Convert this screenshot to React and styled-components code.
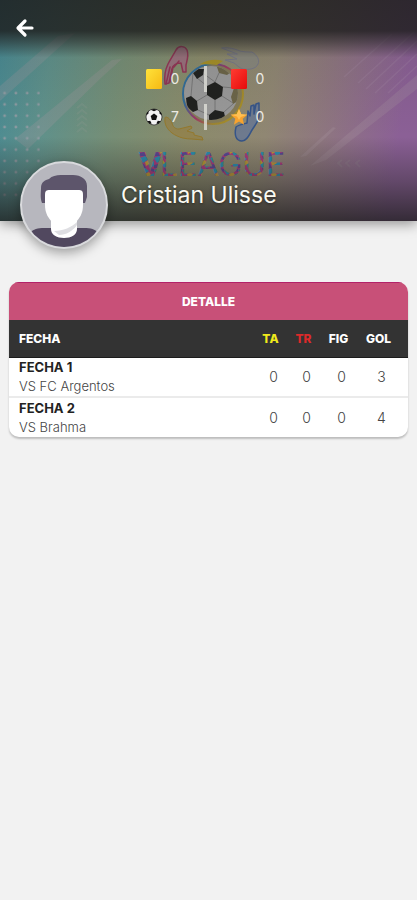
import React from "react";
import styled, { createGlobalStyle } from "styled-components";

const GlobalStyle = createGlobalStyle`
  * { box-sizing: border-box; }
  body {
    margin: 0;
    background: #f2f2f2;
    font-family: Inter, "Open Sans", sans-serif;
    color: #222;
  }
`;

const Screen = styled.div`
  min-height: 100vh;
  background: #f2f2f2;
`;

const Hero = styled.header`
  position: relative;
  display: flex;
  flex-direction: column;
  box-shadow: 0 3px 12px rgba(0, 0, 0, 0.4);
`;

const Backdrop = styled.svg`
  position: absolute;
  inset: 0;
  width: 100%;
  height: 100%;
`;

const TopBar = styled.nav`
  position: relative;
  display: flex;
  align-items: center;
  height: 56px;
  padding: 0 11px;
`;

const BackButton = styled.button`
  display: grid;
  place-items: center;
  width: 28px;
  height: 28px;
  padding: 0;
  border: 0;
  background: none;
  cursor: pointer;
`;

const Stats = styled.div`
  position: relative;
  display: grid;
  grid-template-columns: auto 3px auto;
  justify-content: center;
  gap: 12px 23px;
  padding: 10px 6px 0 0;
`;

const Stat = styled.div`
  display: flex;
  align-items: center;
  gap: 6px;
  height: 26px;
  font-size: 14px;
  line-height: 20px;
  color: #eceae4;
`;

const StatValue = styled.span`
  width: 12px;
  text-align: center;
`;

const Divider = styled.span`
  background: rgba(222, 222, 216, 0.8);
`;

const Profile = styled.div`
  position: relative;
  display: flex;
  align-items: flex-start;
  gap: 13px;
  margin: 31px 0 -28px;
  padding: 0 20px;
`;

const Avatar = styled.svg`
  flex: none;
  width: 88px;
  height: 88px;
  border: 2px solid #d9dadd;
  border-radius: 50%;
  background: #b7b7be;
  box-shadow: 0 4px 12px rgba(0, 0, 0, 0.35);
`;

const Name = styled.h1`
  margin: 20px 0 0;
  font-size: 23px;
  line-height: 28px;
  font-weight: 400;
  color: #fbfaf2;
  text-shadow: 0 1px 3px rgba(0, 0, 0, 0.5);
`;

const Card = styled.section`
  margin: 61px 9px 0;
  border-radius: 10px;
  overflow: hidden;
  background: #fff;
  box-shadow: 0 2px 2px rgba(0, 0, 0, 0.22);
`;

const Table = styled.table`
  width: 100%;
  border-collapse: collapse;
  table-layout: fixed;
`;

const Caption = styled.caption`
  height: 38px;
  border-top: 1px solid #b32269;
  background: #c85078;
  color: #fff;
  font-size: 12px;
  line-height: 37px;
  font-weight: 800;
`;

const HeadCell = styled.th`
  width: ${(p) => p.$width || "auto"};
  height: 37px;
  padding: ${(p) => p.$padding || "2px 0 0"};
  border-bottom: 1px solid #1c1c1c;
  background: #333;
  color: ${(p) => p.$color || "#fff"};
  font-size: 12px;
  line-height: 16px;
  font-weight: 800;
  text-align: ${(p) => p.$align || "center"};
`;

const Row = styled.tr`
  height: 40px;
  & + & > * { border-top: 2px solid #ebebeb; }
`;

const MatchCell = styled.th`
  padding: 0 10px;
  text-align: left;
  font-weight: 300;
  font-size: 13px;
  line-height: 19px;
  color: #444;
`;

const Round = styled.strong`
  display: block;
  font-weight: 700;
  color: #222;
`;

const ValueCell = styled.td`
  padding: ${(p) => p.$padding || "0 0 0 6px"};
  text-align: center;
  font-size: 14px;
  line-height: 18px;
  font-weight: 300;
  color: #444;
`;

const pentagons = (
  <g fill="#20211f">
    <path d="M207 86l8-4 8 5-1 9-7 4-8-5z" />
    <path d="M186 98l5-2 6 5 1 9-5 2-6-5z" />
    <path d="M209 115l6-5 9 2 1 5-7 5-9-2z" />
    <path d="M193 73l5-4 6 0-1 6-6 4z" />
    <path d="M217 67l8 0 6 5-4 3-8-2z" fill="#6c6548" />
    <path d="M234 88l5 1-1 12-5 3-2-7z" fill="#6c6548" />
  </g>
);

function LeagueBackdrop() {
  return (
    <Backdrop viewBox="0 0 417 221" preserveAspectRatio="xMidYMid slice" aria-hidden="true">
      <defs>
        <linearGradient id="field" x1="0" y1="0" x2="1" y2="0.08">
          <stop offset="0" stopColor="#478a94" />
          <stop offset="0.14" stopColor="#5f918b" />
          <stop offset="0.32" stopColor="#778e75" />
          <stop offset="0.5" stopColor="#8b8b6b" />
          <stop offset="0.68" stopColor="#908773" />
          <stop offset="0.82" stopColor="#8e7680" />
          <stop offset="1" stopColor="#8b6096" />
        </linearGradient>
        <linearGradient id="shade" x1="0" y1="0" x2="0" y2="1">
          <stop offset="0" stopColor="#1c1c1c" stopOpacity="0.84" />
          <stop offset="0.14" stopColor="#1c1c1c" stopOpacity="0.82" />
          <stop offset="0.19" stopColor="#222" stopOpacity="0.55" />
          <stop offset="0.26" stopColor="#222" stopOpacity="0.08" />
          <stop offset="0.62" stopColor="#222" stopOpacity="0" />
          <stop offset="0.82" stopColor="#222" stopOpacity="0.38" />
          <stop offset="1" stopColor="#1c1c1c" stopOpacity="0.78" />
        </linearGradient>
        <pattern id="dots" width="11.3" height="11.3" patternUnits="userSpaceOnUse" x="-1" y="87.5">
          <circle cx="5.6" cy="5.6" r="1.4" fill="#8d9ba2" />
        </pattern>
        <pattern id="confetti" width="14" height="12" patternUnits="userSpaceOnUse">
          <rect width="14" height="12" fill="#b03a7c" />
          <path d="M0 2l5-2 4 3-6 4zM8 8l6-3v5l-4 2z" fill="#2a8fb4" />
          <path d="M5 6l4-2 2 3-5 3z" fill="#c09a35" />
          <path d="M0 9l4-1 2 4H0zM10 0l4 1v3l-3-1z" fill="#5a4796" />
        </pattern>
        <linearGradient id="ring" x1="0" y1="0" x2="1" y2="0.6">
          <stop offset="0" stopColor="#316c99" />
          <stop offset="0.3" stopColor="#316c99" />
          <stop offset="0.55" stopColor="#9c3665" />
          <stop offset="0.8" stopColor="#9b8433" />
          <stop offset="1" stopColor="#a68d28" />
        </linearGradient>
        <clipPath id="ballClip"><circle cx="211" cy="93" r="27" /></clipPath>
      </defs>
      <rect width="417" height="221" fill="url(#field)" />
      <g fill="#ab9aa3" opacity="0.24">
        <path d="M0 86 58 36 75 33 0 101z" />
        <path d="M15 139 112 60 122 59 103 76 28 149z" />
        <path d="M310 166 417 75V89L326 160z" />
        <path d="M300 157 333 127 336 128 306 156z" />
      </g>
      <path
        d="M344 77l48-43M358 83l56-51M366 89l51-48M375 93l42-39M388 93l29-27"
        stroke="#b094af" strokeWidth="1.5" opacity="0.2" fill="none"
      />
      <rect x="-1" y="87.5" width="41" height="113" fill="url(#dots)" />
      <path
        d="M77 108l5-4 5 4M77 114l5-4 5 4M77 120l5-4 5 4M77 126l5-4 5 4M77 132l5-4 5 4M342 160l-4 3 4 4M350 160l-4 3 4 4M360 160l-4 3 4 4"
        fill="none" stroke="#a4a19b" strokeWidth="2" opacity="0.16"
      />
      <g strokeLinejoin="round" strokeLinecap="round">
        <path
          d="M165 84c-1-8 0-14 3-20 3-6 6-10 8-14 3-5 9-4 11 0 2 5 0 11-1 15l0 7-3 0-2-9c-5 0-8 2-9 6l-3 14z"
          fill="#98717c" stroke="#913655" strokeWidth="1.5"
        />
        <path d="M166 84l4-17M170 82l3-15M174 67l5-6" stroke="#913655" strokeWidth="1.5" fill="none" />
        <path
          d="M222 48c7-1 13 1 18 3 4 1 8 1 12 1 5 3 8 8 6 12-2 5-9 6-15 5-4-1-6-4-9-6l-9-3 12-1-10-5 10 0z"
          fill="#88877c" stroke="#777888" strokeWidth="1"
        />
        <path
          d="M165 118c-1 6 2 11 7 15 7 5 14 6 20 6l11 1-1-3-8-2 0-2-7-2 5-3-1-2-12 3c-4 0-6-2-7-6-1-3-4-6-6-6z"
          fill="#918350" stroke="#94792d" strokeWidth="1"
        />
        <path
          d="M236 127c-2 8 0 14 6 14 5 0 7-6 10-11 3-5 7-9 7-14l0-13-3 1-2 10 0-9-3 1-1 10-2-5-1 12c-4 1-9 2-11 4z"
          fill="#6e7a8e" stroke="#365589" strokeWidth="1.5"
        />
        <circle cx="213" cy="94" r="30" fill="#847b58" />
        <circle cx="213" cy="94" r="30" fill="none" stroke="url(#ring)" strokeWidth="2" />
        <path d="M200 64c9-5 16-5 23-3l-6 4z" fill="#a58f27" />
        <circle cx="211" cy="93" r="27" fill="#999" />
        <g clipPath="url(#ballClip)">
          <path
            d="M197 78l10 8M204 74l11 8M215 82l4-9M223 87l11 1M222 96l11 7M215 100l0 10M207 95l-10 6M198 110l11 5M191 96l2-23M224 112l9-8M187 107l-4 4"
            stroke="#777" fill="none"
          />
          {pentagons}
        </g>
      </g>
      <text
        x="138" y="176" fill="url(#confetti)" fontFamily="Inter, sans-serif" fontSize="32" fontWeight="800"
      >
        V<tspan x="160" fontWeight="400">LEAGUE</tspan>
      </text>
      <rect width="417" height="221" fill="url(#shade)" />
    </Backdrop>
  );
}

const CardIcon = ({ light, dark, id }) => (
  <svg width="18" height="22" viewBox="0 0 18 22" aria-hidden="true">
    <defs>
      <linearGradient id={id} x1="0" y1="0" x2="1" y2="1">
        <stop offset="0" stopColor={light} />
        <stop offset="1" stopColor={dark} />
      </linearGradient>
    </defs>
    <rect x="1" y="1" width="16" height="20" rx="1.5" fill={`url(#${id})`} />
  </svg>
);

const BallIcon = () => (
  <svg width="18" height="18" viewBox="0 0 18 18" aria-hidden="true">
    <circle cx="9" cy="9" r="8" fill="#f2f2f2" stroke="#222" strokeWidth="0.7" />
    <path d="M9 5.6l3.3 2.4-1.2 3.9H6.9L5.7 8z" fill="#111" />
    <path
      d="M5.6 1.8 9 3.2l3.4-1.4L9 1zM1.2 7.2l2.2-1.5.3-3.1L1.7 5zM16.8 7.2l-2.2-1.5-.3-3.1L16.3 5zM2.3 13.2l2.9-.5 1.5 2.9-1.9.4zM15.7 13.2l-2.9-.5-1.5 2.9 1.9.4z"
      fill="#111"
    />
  </svg>
);

const StarIcon = () => (
  <svg width="18" height="18" viewBox="0 0 18 18" aria-hidden="true">
    <path d="M9 1l2.3 5.3 6 .5-4.6 4 1.4 5.9L9 13.6l-5.1 3.1 1.4-5.9-4.6-4 6-.5z" fill="#f8a32e" />
    <path d="M9 1l2.3 5.3 6 .5-6.6 2.1L9 12l-2-3.4L.7 6.8l6-.5z" fill="#ffc153" />
  </svg>
);

function PlayerAvatar() {
  return (
    <Avatar viewBox="0 0 84 84" role="img" aria-label="Cristian Ulisse">
      <path d="M8 70c3-4 8-5 14-5h40c7 0 11 1 14 5L64 84H20z" fill="#51485f" />
      <path d="M29 54h26v12c0 6-6 9-13 9s-13-3-13-9z" fill="#fff" />
      <path d="M32 68c9 0 18-4 23-9v3c-4 6-11 10-18 10z" fill="#dedee2" />
      <path
        d="M20 40c-2-5-1-11-1-15 0-6 4-8 8-9 3-3 7-4 12-4h12c8 0 14 4 14 11v11l-2 6z"
        fill="#5d556b"
      />
      <path d="M23 32c0-4 1-5 5-5h28c4 0 5 1 5 5v10c0 13-9 21-19 21s-19-8-19-21z" fill="#fff" />
    </Avatar>
  );
}

const matches = [
  { round: "FECHA 1", rival: "VS FC Argentos", values: [0, 0, 0, 3] },
  { round: "FECHA 2", rival: "VS Brahma", values: [0, 0, 0, 4] },
];

export default function App() {
  return (
    <Screen>
      <GlobalStyle />
      <Hero>
        <LeagueBackdrop />
        <TopBar>
          <BackButton type="button" aria-label="Volver">
            <svg width="20" height="20" viewBox="0 0 20 20" fill="none" aria-hidden="true">
              <path
                d="M10 3 3 10l7 7M3.5 10H17"
                stroke="#fff" strokeWidth="3.2" strokeLinecap="round" strokeLinejoin="round"
              />
            </svg>
          </BackButton>
        </TopBar>
        <Stats>
          <Stat><CardIcon id="yellowCard" light="#ffe23a" dark="#f5b914" /><StatValue>0</StatValue></Stat>
          <Divider />
          <Stat><CardIcon id="redCard" light="#ff3c32" dark="#e60b0b" /><StatValue>0</StatValue></Stat>
          <Stat><BallIcon /><StatValue>7</StatValue></Stat>
          <Divider />
          <Stat><StarIcon /><StatValue>0</StatValue></Stat>
        </Stats>
        <Profile>
          <PlayerAvatar />
          <Name>Cristian Ulisse</Name>
        </Profile>
      </Hero>
      <Card>
        <Table>
          <Caption>DETALLE</Caption>
          <thead>
            <tr>
              <HeadCell scope="col" $align="left" $padding="2px 10px 0">FECHA</HeadCell>
              <HeadCell scope="col" $width="33px" $color="#f0ea1c">TA</HeadCell>
              <HeadCell scope="col" $width="33px" $color="#dc2a2a">TR</HeadCell>
              <HeadCell scope="col" $width="37px">FIG</HeadCell>
              <HeadCell scope="col" $width="51px" $padding="2px 8px 0 0">GOL</HeadCell>
            </tr>
          </thead>
          <tbody>
            {matches.map((m) => (
              <Row key={m.round}>
                <MatchCell scope="row"><Round>{m.round}</Round>{m.rival}</MatchCell>
                {m.values.map((v, i) => (
                  <ValueCell key={i} $padding={i === 3 ? "0 2px 0 0" : undefined}>{v}</ValueCell>
                ))}
              </Row>
            ))}
          </tbody>
        </Table>
      </Card>
    </Screen>
  );
}
